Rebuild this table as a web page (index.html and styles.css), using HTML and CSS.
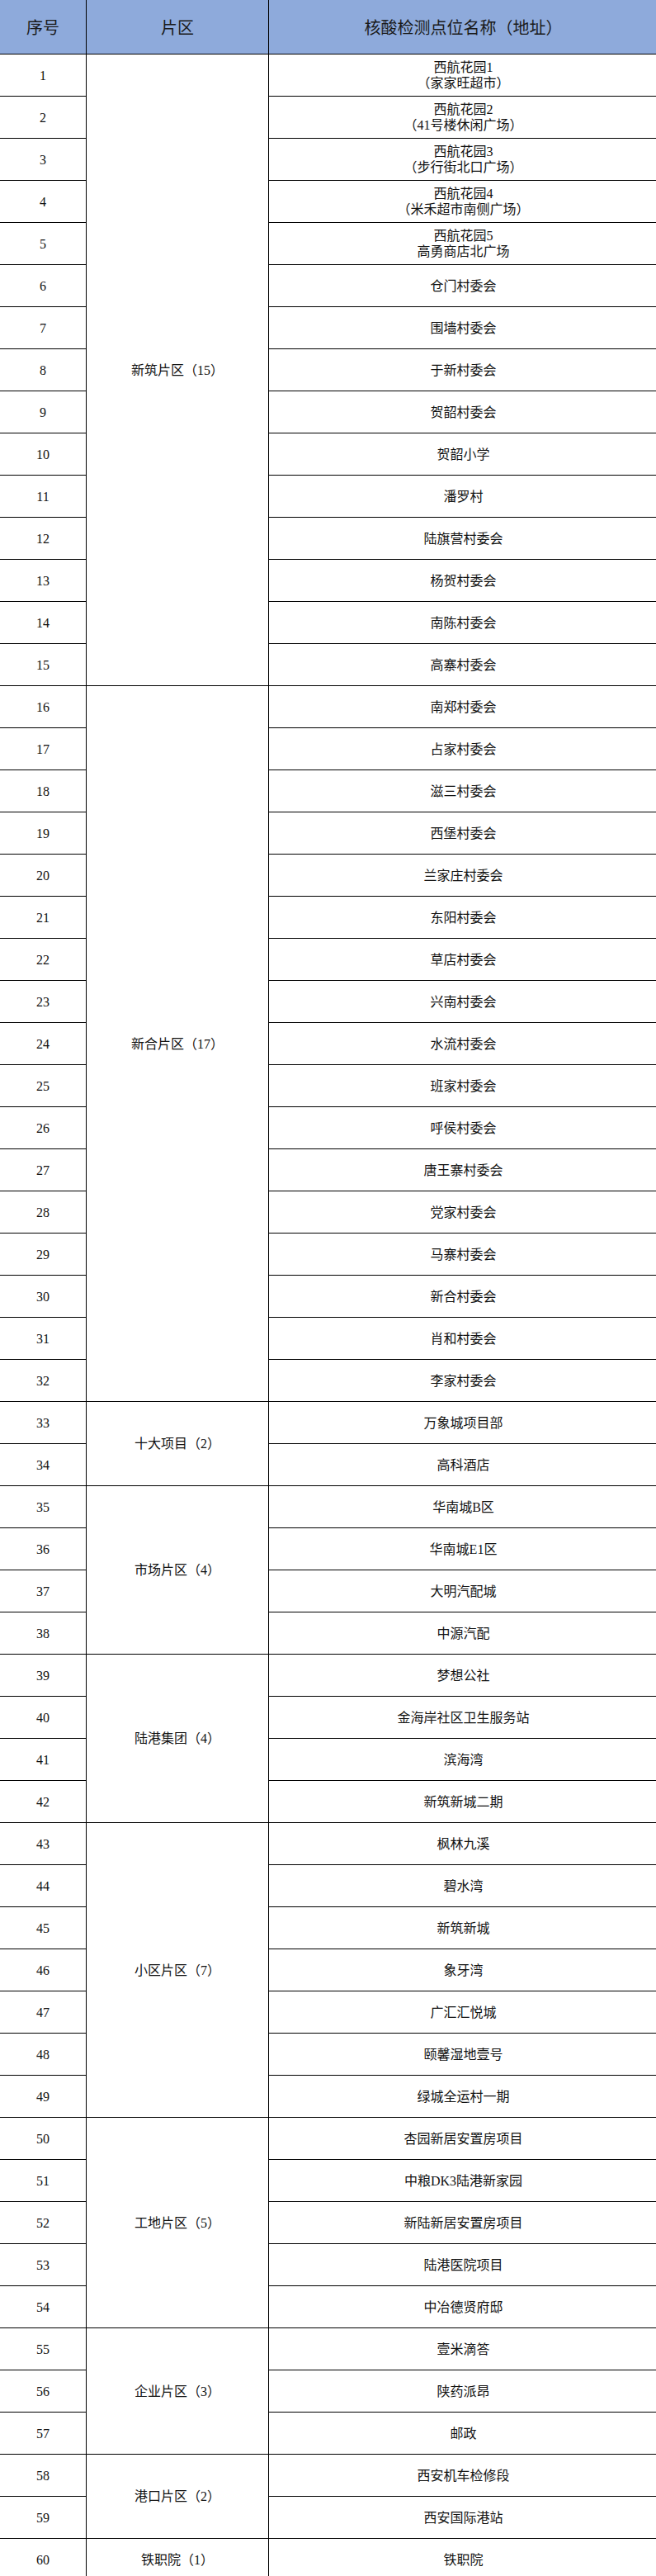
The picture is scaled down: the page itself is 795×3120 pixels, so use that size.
FILE: index.html
```html
<!DOCTYPE html>
<html lang="zh-CN">
<head>
<meta charset="utf-8">
<title>核酸检测点位</title>
<link rel="stylesheet" href="styles.css">
</head>
<body>
<div class="sheet">
  <div class="hd c1">序号</div>
  <div class="hd c2">片区</div>
  <div class="hd c3">核酸检测点位名称（地址）</div>

  <div class="num">1</div><div class="grp s15">新筑片区（15）</div><div class="name two">西航花园1<br>（家家旺超市）</div>
  <div class="num">2</div><div class="name two">西航花园2<br>（41号楼休闲广场）</div>
  <div class="num">3</div><div class="name two">西航花园3<br>（步行街北口广场）</div>
  <div class="num">4</div><div class="name two">西航花园4<br>（米禾超市南侧广场）</div>
  <div class="num">5</div><div class="name two">西航花园5<br>高勇商店北广场</div>
  <div class="num">6</div><div class="name">仓门村委会</div>
  <div class="num">7</div><div class="name">围墙村委会</div>
  <div class="num">8</div><div class="name">于新村委会</div>
  <div class="num">9</div><div class="name">贺韶村委会</div>
  <div class="num">10</div><div class="name">贺韶小学</div>
  <div class="num">11</div><div class="name">潘罗村</div>
  <div class="num">12</div><div class="name">陆旗营村委会</div>
  <div class="num">13</div><div class="name">杨贺村委会</div>
  <div class="num">14</div><div class="name">南陈村委会</div>
  <div class="num">15</div><div class="name">高寨村委会</div>

  <div class="num">16</div><div class="grp s17">新合片区（17）</div><div class="name">南郑村委会</div>
  <div class="num">17</div><div class="name">占家村委会</div>
  <div class="num">18</div><div class="name">滋三村委会</div>
  <div class="num">19</div><div class="name">西堡村委会</div>
  <div class="num">20</div><div class="name">兰家庄村委会</div>
  <div class="num">21</div><div class="name">东阳村委会</div>
  <div class="num">22</div><div class="name">草店村委会</div>
  <div class="num">23</div><div class="name">兴南村委会</div>
  <div class="num">24</div><div class="name">水流村委会</div>
  <div class="num">25</div><div class="name">班家村委会</div>
  <div class="num">26</div><div class="name">呼侯村委会</div>
  <div class="num">27</div><div class="name">唐王寨村委会</div>
  <div class="num">28</div><div class="name">党家村委会</div>
  <div class="num">29</div><div class="name">马寨村委会</div>
  <div class="num">30</div><div class="name">新合村委会</div>
  <div class="num">31</div><div class="name">肖和村委会</div>
  <div class="num">32</div><div class="name">李家村委会</div>

  <div class="num">33</div><div class="grp s2">十大项目（2）</div><div class="name">万象城项目部</div>
  <div class="num">34</div><div class="name">高科酒店</div>

  <div class="num">35</div><div class="grp s4">市场片区（4）</div><div class="name">华南城B区</div>
  <div class="num">36</div><div class="name">华南城E1区</div>
  <div class="num">37</div><div class="name">大明汽配城</div>
  <div class="num">38</div><div class="name">中源汽配</div>

  <div class="num">39</div><div class="grp s4">陆港集团（4）</div><div class="name">梦想公社</div>
  <div class="num">40</div><div class="name">金海岸社区卫生服务站</div>
  <div class="num">41</div><div class="name">滨海湾</div>
  <div class="num">42</div><div class="name">新筑新城二期</div>

  <div class="num">43</div><div class="grp s7">小区片区（7）</div><div class="name">枫林九溪</div>
  <div class="num">44</div><div class="name">碧水湾</div>
  <div class="num">45</div><div class="name">新筑新城</div>
  <div class="num">46</div><div class="name">象牙湾</div>
  <div class="num">47</div><div class="name">广汇汇悦城</div>
  <div class="num">48</div><div class="name">颐馨湿地壹号</div>
  <div class="num">49</div><div class="name">绿城全运村一期</div>

  <div class="num">50</div><div class="grp s5">工地片区（5）</div><div class="name">杏园新居安置房项目</div>
  <div class="num">51</div><div class="name">中粮DK3陆港新家园</div>
  <div class="num">52</div><div class="name">新陆新居安置房项目</div>
  <div class="num">53</div><div class="name">陆港医院项目</div>
  <div class="num">54</div><div class="name">中冶德贤府邸</div>

  <div class="num">55</div><div class="grp s3">企业片区（3）</div><div class="name">壹米滴答</div>
  <div class="num">56</div><div class="name">陕药派昂</div>
  <div class="num">57</div><div class="name">邮政</div>

  <div class="num">58</div><div class="grp s2">港口片区（2）</div><div class="name">西安机车检修段</div>
  <div class="num">59</div><div class="name">西安国际港站</div>

  <div class="num">60</div><div class="grp s1">铁职院（1）</div><div class="name">铁职院</div>
</div>
</body>
</html>
```

FILE: styles.css
```css
html, body {
  margin: 0;
  padding: 0;
  background: #ffffff;
}

.sheet {
  display: grid;
  grid-template-columns: 104px 220px 1fr;
  grid-template-rows: 65px;
  grid-auto-rows: 50px;
  gap: 1px;
  background: #000000;
  width: 797px;
  font-family: "Liberation Serif", "Noto Sans CJK SC", serif;
  color: #111111;
}

.sheet > div {
  background: #ffffff;
  display: flex;
  align-items: center;
  justify-content: center;
  text-align: center;
  font-size: 16px;
  line-height: 19px;
}

.sheet > .hd {
  background: #8eaadb;
  font-family: "Noto Sans CJK SC", sans-serif;
  font-size: 20px;
  color: #1a1a1a;
  grid-row: 1;
}

.hd.c1 { grid-column: 1; }
.hd.c2 { grid-column: 2; }
.hd.c3 { grid-column: 3; }

.num { grid-column: 1; }
.grp { grid-column: 2; }
.name { grid-column: 3; }

.two { line-height: 19px; }

.s1 { grid-row: span 1; }
.s2 { grid-row: span 2; }
.s3 { grid-row: span 3; }
.s4 { grid-row: span 4; }
.s5 { grid-row: span 5; }
.s7 { grid-row: span 7; }
.s15 { grid-row: span 15; }
.s17 { grid-row: span 17; }
```
